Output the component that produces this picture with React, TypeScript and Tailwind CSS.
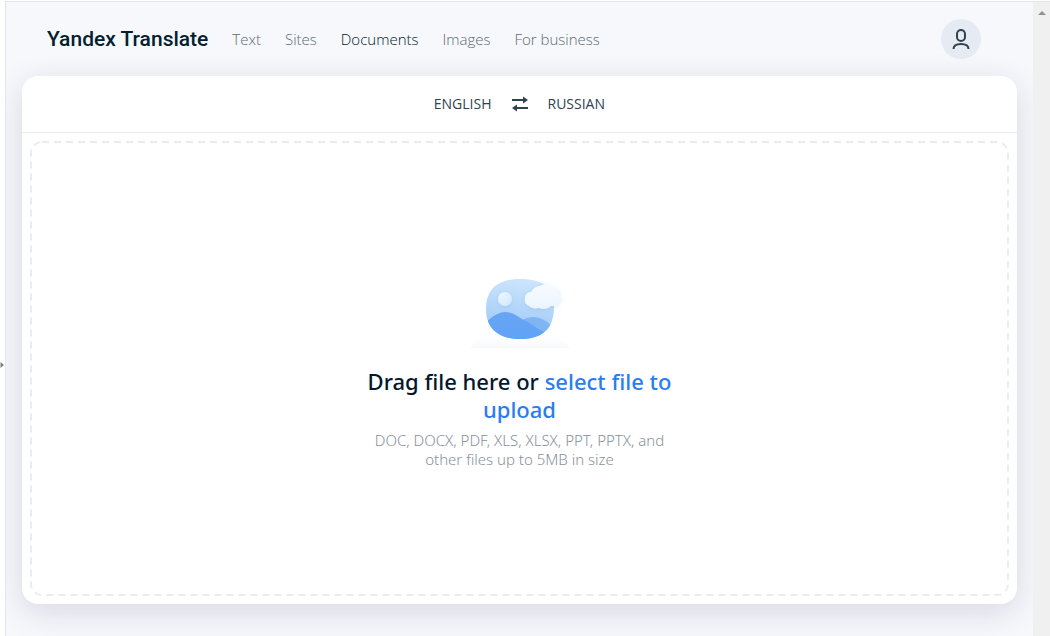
import React, { useState } from 'react';
import clsx from 'clsx';

const sections = ['Text', 'Sites', 'Documents', 'Images', 'For business'];

function UserIcon() {
  return (
    <svg viewBox="0 0 24 24" className="w-6 h-6" fill="none" stroke="#2f424f" strokeWidth="2" aria-hidden="true">
      <rect x="8" y="3" width="8" height="11" rx="4" />
      <path d="M4.500 22c0-3.500 2.500-5 7.500-5s7.500 1.500 7.500 5" />
    </svg>
  );
}

function SwapIcon() {
  return (
    <svg viewBox="0 0 16 16" className="w-4 h-4" fill="#2f424f" aria-hidden="true">
      <path d="M0 3h11V0.500L16 4l-5 3.500V5H0z" />
      <path d="M16 11H5V8.500L0 12l5 3.500V13h11z" />
    </svg>
  );
}

function Illustration() {
  return (
    <svg viewBox="0 0 104 76" className="w-26 h-19" aria-hidden="true">
      <defs>
        <linearGradient id="sky" x1="0.5" y1="0" x2="0.4" y2="0.8">
          <stop offset="0" stopColor="#cfe6fc" />
          <stop offset="1" stopColor="#a2cbf8" />
        </linearGradient>
        <linearGradient id="hill" x1="0" y1="0" x2="0" y2="1">
          <stop offset="0" stopColor="#68a5f3" />
          <stop offset="1" stopColor="#60a2f8" />
        </linearGradient>
        <linearGradient id="cloud" x1="0" y1="0" x2="0" y2="1">
          <stop offset="0" stopColor="#f7fbff" />
          <stop offset="1" stopColor="#ebf5fe" />
        </linearGradient>
        <linearGradient id="sun" x1="0" y1="0" x2="1" y2="1">
          <stop offset="0" stopColor="#f0f9ff" />
          <stop offset="1" stopColor="#cfe6fd" />
        </linearGradient>
        <linearGradient id="ground" x1="0" y1="0" x2="0" y2="1">
          <stop offset="0" stopColor="#ffffff" />
          <stop offset="1" stopColor="#f8f9fb" />
        </linearGradient>
        <filter id="soft" x="-40%" y="-40%" width="180%" height="200%">
          <feDropShadow dx="0" dy="1" stdDeviation="2" floodColor="#5f9ee6" floodOpacity="0.25" />
        </filter>
        <clipPath id="blob">
          <path d="M52 6c24 0 34 9 34 28 0 22-12 32-34 32-22 0-34-11-34-30C18 15 31 6 52 6z" />
        </clipPath>
      </defs>
      <path d="M14 62h76l12 13H2z" fill="url(#ground)" />
      <g clipPath="url(#blob)">
        <rect x="16" y="4" width="72" height="64" fill="url(#sky)" />
        <path d="M50 50c5-4 10-6 15-6 8 0 13 4 23 12v12H50z" fill="#7fb4f5" />
        <path d="M16 51c8-7 14-12 21-12 9 0 14 6 23 10 8 5 16 11 26 15v6H16z" fill="url(#hill)" />
      </g>
      <circle cx="37" cy="26" r="7" fill="url(#sun)" filter="url(#soft)" />
      <path
        d="M61 33c-4-2-5-5-4-8 0-4 3-6 6-6 2-4 5-6 9-6 3-2 8-2 11 0 4 0 7 3 7 6 2 2 3 5 2 8 0 4-5 6-9 6-3 3-8 4-12 2-4 1-8 0-10-2z"
        fill="url(#cloud)"
        filter="url(#soft)"
      />
    </svg>
  );
}

function Header() {
  return (
    <header className="flex items-center h-[74px] pl-[25px] pr-9">
      <a href="#home" className="font-['Roboto',sans-serif] text-[21px] leading-7 font-medium text-[#03202f]">
        Yandex Translate
      </a>
      <nav className="flex items-center gap-6 ml-6 text-[15px] leading-5">
        {sections.map((section) => (
          <a
            key={section}
            href="#section"
            className={clsx('font-light', section === 'Documents' ? 'text-[#00182b]' : 'text-[#5d6975]')}
          >
            {section}
          </a>
        ))}
      </nav>
      <button
        aria-label="Account"
        className="flex items-center justify-center w-10 h-10 ml-auto rounded-full bg-[#e6ebf3]"
      >
        <UserIcon />
      </button>
    </header>
  );
}

function LanguageBar() {
  const [languages, setLanguages] = useState(['English', 'Russian']);

  return (
    <div className="grid grid-cols-[1fr_auto_1fr] items-center gap-5 h-14 text-sm text-[#2f424f]">
      <button className="justify-self-end uppercase">{languages[0]}</button>
      <button aria-label="Swap languages" onClick={() => setLanguages([languages[1], languages[0]])}>
        <SwapIcon />
      </button>
      <button className="justify-self-start uppercase">{languages[1]}</button>
    </div>
  );
}

function DropZone() {
  return (
    <div className="relative flex flex-1 flex-col items-center justify-center m-2 pt-1 font-['Noto_Sans',sans-serif]">
      {/* Dashed outline */}
      <svg className="absolute inset-0 w-full h-full p-px overflow-visible pointer-events-none" aria-hidden="true">
        <rect width="100%" height="100%" rx="11" fill="none" stroke="#eaecf1" strokeWidth="2" strokeDasharray="7 5" />
      </svg>
      <Illustration />
      <div className="w-[304px] mt-[18px] text-center">
        <h1 className="text-[22px] leading-7 font-medium text-[#03182b]">
          Drag file here or{' '}
          <label htmlFor="document" className="text-[#2a7df0] cursor-pointer">
            select file to upload
          </label>
        </h1>
        <input id="document" type="file" className="sr-only" />
        <p className="mt-2 text-[15px] leading-[19px] font-light text-[#87919b]">
          DOC, DOCX, PDF, XLS, XLSX, PPT, PPTX, and other files up to 5MB in size
        </p>
      </div>
    </div>
  );
}

export default function App() {
  return (
    <div className="flex min-h-screen pt-px bg-white font-['Open_Sans',sans-serif]">
      <div className="flex items-center w-[6px] border-r border-[#e2e6ec]">
        <svg viewBox="0 0 4 6" className="w-1 h-[6px] mt-23" fill="#808080" aria-hidden="true">
          <path d="M0.500 0L4 3 0.500 6z" />
        </svg>
      </div>
      <div className="flex flex-1 flex-col px-4 pb-8 overflow-hidden border-t border-[#e2e6ea] bg-[#f6f8fc]">
        <Header />
        <main className="flex flex-1 flex-col rounded-2xl bg-white shadow-[0_8px_32px_rgba(40,30,70,0.14)]">
          <LanguageBar />
          <hr className="border-[#e8eef0]" />
          <DropZone />
        </main>
      </div>
      {/* Scrollbar track */}
      <div className="flex justify-center w-[17px] pt-2 border-t border-[#e2e6ea] bg-[#f0f0f0]">
        <svg viewBox="0 0 8 5" className="w-2 h-[5px]" fill="#929292" aria-hidden="true">
          <path d="M0 5l4-4 4 4z" />
        </svg>
      </div>
    </div>
  );
}
